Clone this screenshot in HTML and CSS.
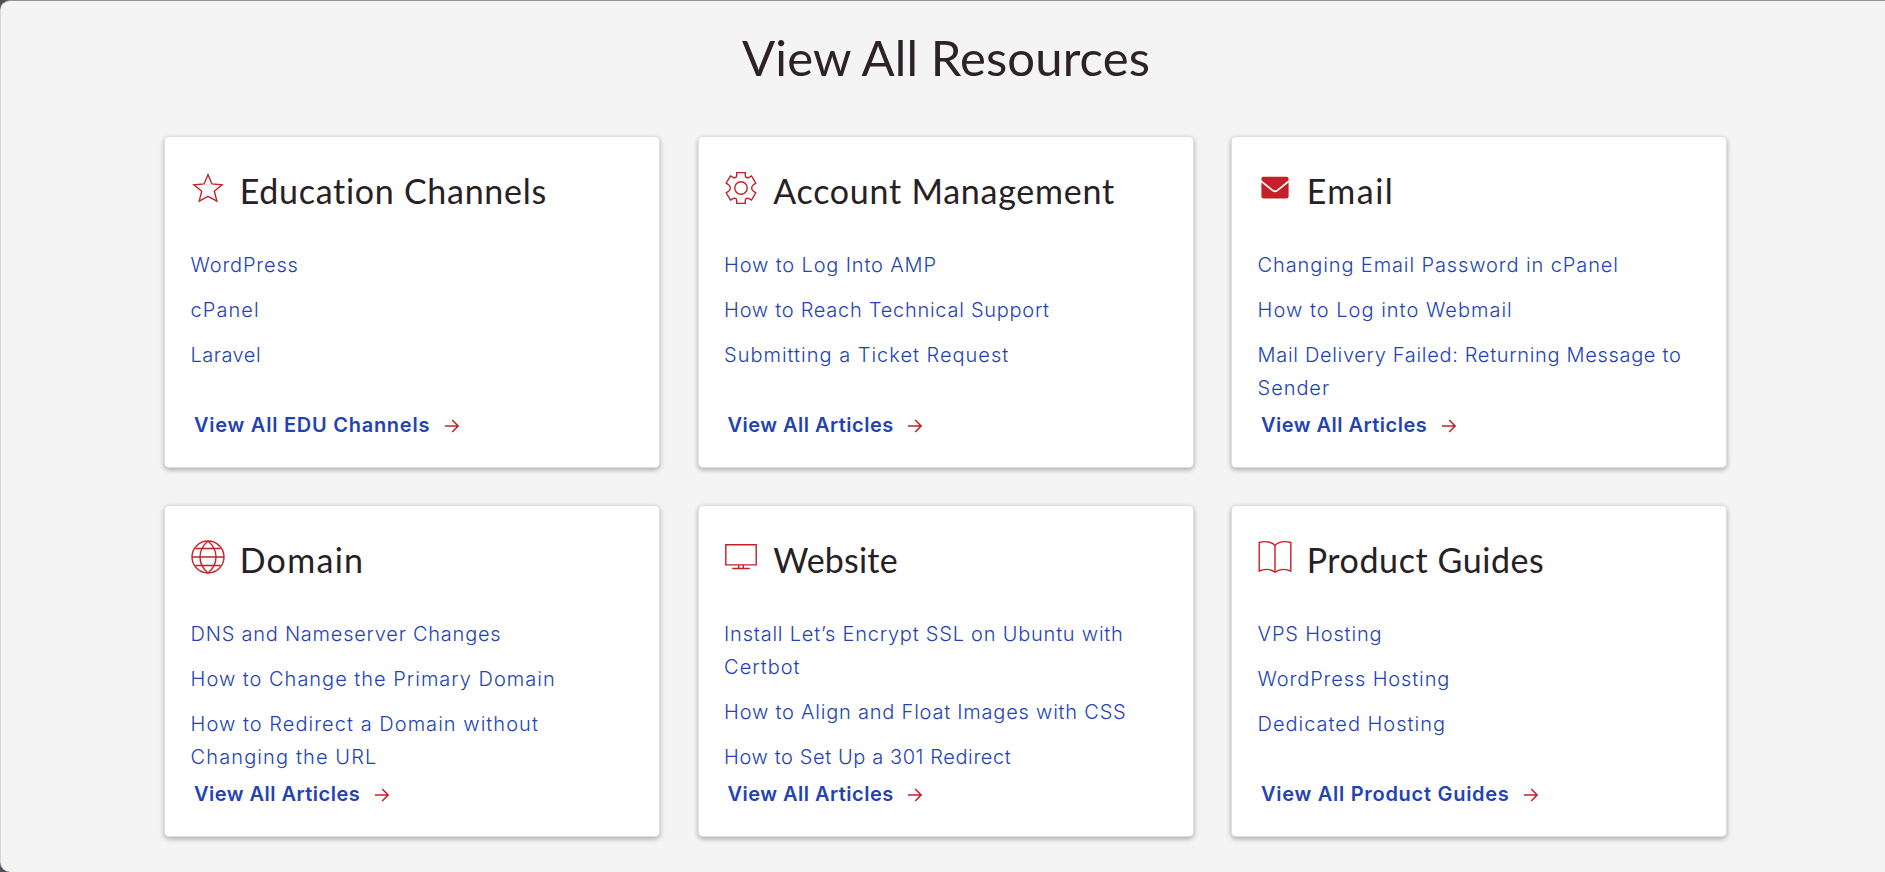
FILE: index.html
```html
<!DOCTYPE html>
<html lang="en">
<head>
<meta charset="utf-8">
<title>View All Resources</title>
<link rel="stylesheet" href="styles.css">
</head>
<body>
<main class="resources">
  <h1 class="title">View All Resources</h1>
  <div class="grid">

    <section class="card education">
      <header class="card-head">
        <svg class="icon" viewBox="0 0 34 34"><path d="M17 3.600l3.900 9.300 10.200.800-7.800 6.600 2.600 9.800L17 25.400l-8.800 4.700 2.500-9.800-7.800-6.600 10.200-.800z"/></svg>
        <h2>Education Channels</h2>
      </header>
      <ul class="links">
        <li><a>WordPress</a></li>
        <li><a>cPanel</a></li>
        <li><a>Laravel</a></li>
      </ul>
      <a class="more">View All EDU Channels<svg class="arrow" viewBox="0 0 14 14"><path d="M0 7h13M7.200.900L13.100 7l-5.900 6.100"/></svg></a>
    </section>

    <section class="card account">
      <header class="card-head">
        <svg class="icon" viewBox="0 0 34 34"><circle cx="17" cy="17" r="6.200"/><path d="M12.700 1.600h8.600v3.300q.2 1.600 1.900 1.800 1 .1 1.800-.4l2.500-1.300 4.300 7.200-2.600 1.800q-1.500 1.200-1.500 3t1.500 3l2.600 1.800-4.300 7.200-2.500-1.300q-.8-.5-1.800-.4-1.700.2-1.900 1.800v3.300h-8.600v-3.300q-.2-1.600-1.900-1.800-1-.1-1.800.4L6.500 29l-4.300-7.200L4.800 20q1.500-1.200 1.500-3t-1.500-3l-2.600-1.800L6.500 5 9 6.300q.8.500 1.800.4 1.700-.2 1.900-1.800z"/></svg>
        <h2>Account Management</h2>
      </header>
      <ul class="links">
        <li><a>How to Log Into AMP</a></li>
        <li><a>How to Reach Technical Support</a></li>
        <li><a>Submitting a Ticket Request</a></li>
      </ul>
      <a class="more">View All Articles<svg class="arrow" viewBox="0 0 14 14"><path d="M0 7h13M7.200.900L13.100 7l-5.900 6.100"/></svg></a>
    </section>

    <section class="card email">
      <header class="card-head">
        <svg class="icon solid" viewBox="0 0 34 34"><path d="M5.400 5.800h23.200a2 2 0 0 1 2 2v1.500L18.800 18.700q-1.800 1.400-3.600 0L3.400 9.300V7.800a2 2 0 0 1 2-2z"/><path d="M3.400 11.500l11 8.700q2.600 1.900 5.200 0l11-8.700v14a2 2 0 0 1-2 2H5.400a2 2 0 0 1-2-2z"/></svg>
        <h2>Email</h2>
      </header>
      <ul class="links">
        <li><a>Changing Email Password in cPanel</a></li>
        <li><a>How to Log into Webmail</a></li>
        <li><a>Mail Delivery Failed: Returning Message to<br><span class="rest">Sender</span></a></li>
      </ul>
      <a class="more">View All Articles<svg class="arrow" viewBox="0 0 14 14"><path d="M0 7h13M7.200.900L13.100 7l-5.900 6.100"/></svg></a>
    </section>

    <section class="card domain">
      <header class="card-head">
        <svg class="icon" viewBox="0 0 34 34"><circle cx="17" cy="17" r="16"/><path d="M1 17h32M4.400 8.500h25.200M4.400 25.500h25.200M17 1C6.300 10 6.300 24 17 33M17 1c10.700 9 10.700 23 0 32"/></svg>
        <h2>Domain</h2>
      </header>
      <ul class="links">
        <li><a>DNS and Nameserver Changes</a></li>
        <li><a>How to Change the Primary Domain</a></li>
        <li><a>How to Redirect a Domain without<br><span class="rest">Changing the URL</span></a></li>
      </ul>
      <a class="more">View All Articles<svg class="arrow" viewBox="0 0 14 14"><path d="M0 7h13M7.200.900L13.100 7l-5.900 6.100"/></svg></a>
    </section>

    <section class="card website">
      <header class="card-head">
        <svg class="icon" viewBox="0 0 34 34"><path d="M1.800 4.700h30.400v20.200H1.800zM14.700 25v3.300M19.300 25v3.300M8.200 28.500h17.600"/></svg>
        <h2>Website</h2>
      </header>
      <ul class="links">
        <li><a>Install Let’s Encrypt SSL on Ubuntu with<br><span class="rest">Certbot</span></a></li>
        <li><a>How to Align and Float Images with CSS</a></li>
        <li><a>How to Set Up a 301 Redirect</a></li>
      </ul>
      <a class="more">View All Articles<svg class="arrow" viewBox="0 0 14 14"><path d="M0 7h13M7.200.900L13.100 7l-5.900 6.100"/></svg></a>
    </section>

    <section class="card guides">
      <header class="card-head">
        <svg class="icon" viewBox="0 0 34 34"><path d="M17 5.500C12.500.8 7 1 1.200 2.500V31q9-3.800 15.800 1.200 6.800-5 15.800-1.200V2.500C27 1 21.500.8 17 5.500zM17 5.500v26.700"/></svg>
        <h2>Product Guides</h2>
      </header>
      <ul class="links">
        <li><a>VPS Hosting</a></li>
        <li><a>WordPress Hosting</a></li>
        <li><a>Dedicated Hosting</a></li>
      </ul>
      <a class="more">View All Product Guides<svg class="arrow" viewBox="0 0 14 14"><path d="M0 7h13M7.200.900L13.100 7l-5.900 6.100"/></svg></a>
    </section>

  </div>
</main>
</body>
</html>
```
FILE: styles.css
```css
* { box-sizing: border-box; }

body {
  margin: 0;
  height: 872px;
  background: #504e56;
  overflow: hidden;
}

.resources {
  height: 872px;
  padding: 26px 158px 0 164px;
  border-top: 1px solid #95939a;
  border-left: 1px solid #d6d6d8;
  border-radius: 10px 0 0 10px;
  background: #f4f4f4;
}

.title {
  margin: 0;
  font: 400 49px/60px Lato, sans-serif;
  letter-spacing: 0.120px;
  text-align: center;
  color: #2d2228;
}

.grid {
  display: grid;
  grid-template-columns: repeat(3, 494px);
  grid-auto-rows: 330px;
  gap: 39px 39.500px;
  margin-top: 50.400px;
}

.card {
  display: flex;
  flex-direction: column;
  padding: 34px 0 25px 25px;
  border-radius: 4px;
  background: #fff;
  box-shadow: 0 0 0 1px #dededf, 0 2px 5px 1px rgba(0, 0, 0, 0.3);
}

.card-head {
  display: flex;
  gap: 15px;
  height: 77.600px;
  padding-left: 0.700px;
}

.card-head h2 {
  margin: 3px 0 0;
  font: 400 34px/34px Lato, sans-serif;
  color: #272024;
  white-space: nowrap;
}

.icon {
  flex: none;
  width: 34px;
  height: 34px;
  fill: none;
  stroke: #c4202a;
  stroke-width: 1.400;
}

.icon.solid { fill: #c4202a; stroke: none; }

.links {
  display: flex;
  flex-direction: column;
  gap: 12px;
  margin: 0;
  padding: 0 0 0 0.600px;
  list-style: none;
  font: 300 20px/33px Inter, sans-serif;
  letter-spacing: 0.850px;
  color: #2443b3;
  white-space: nowrap;
}

.more {
  display: flex;
  align-items: center;
  gap: 14.800px;
  margin-top: auto;
  padding-left: 4px;
  font: 600 20px/33px Inter, sans-serif;
  letter-spacing: 0.478px;
  color: #2443b3;
}

.arrow {
  width: 14px;
  height: 14px;
  fill: none;
  stroke: #c4202a;
  stroke-width: 1.500;
}

/* Tracking per card */
.education h2 { letter-spacing: 0.710px; }
.education li:nth-child(1) { letter-spacing: 0.826px; }
.education li:nth-child(2) { letter-spacing: 1.050px; }
.education li:nth-child(3) { letter-spacing: 0.475px; }
.education .more { letter-spacing: 0.745px; }

.account h2 { letter-spacing: 0.740px; }
.account li:nth-child(1) { letter-spacing: 0.845px; }
.account li:nth-child(2) { letter-spacing: 0.727px; }
.account li:nth-child(3) { letter-spacing: 0.990px; }

.email h2 { letter-spacing: 1.500px; }
.email li:nth-child(1) { letter-spacing: 0.890px; }
.email li:nth-child(2) { letter-spacing: 1.020px; }
.email li:nth-child(3) { letter-spacing: 0.673px; }
.email .rest { letter-spacing: 0.934px; }

.domain h2 { letter-spacing: 1.300px; }
.domain li:nth-child(1) { letter-spacing: 0.758px; }
.domain li:nth-child(2) { letter-spacing: 0.994px; }
.domain li:nth-child(3) { letter-spacing: 1.037px; }
.domain .rest { letter-spacing: 1.120px; }

.website h2 { letter-spacing: 0.200px; }
.website li:nth-child(1) { letter-spacing: 0.779px; }
.website li:nth-child(2) { letter-spacing: 0.783px; }
.website li:nth-child(3) { letter-spacing: 0.595px; }
.website .rest { letter-spacing: 0.980px; }

.guides h2 { letter-spacing: 0.580px; }
.guides li:nth-child(1) { letter-spacing: 0.820px; }
.guides li:nth-child(2) { letter-spacing: 0.874px; }
.guides li:nth-child(3) { letter-spacing: 0.988px; }
.guides .more { letter-spacing: 0.720px; }
```
